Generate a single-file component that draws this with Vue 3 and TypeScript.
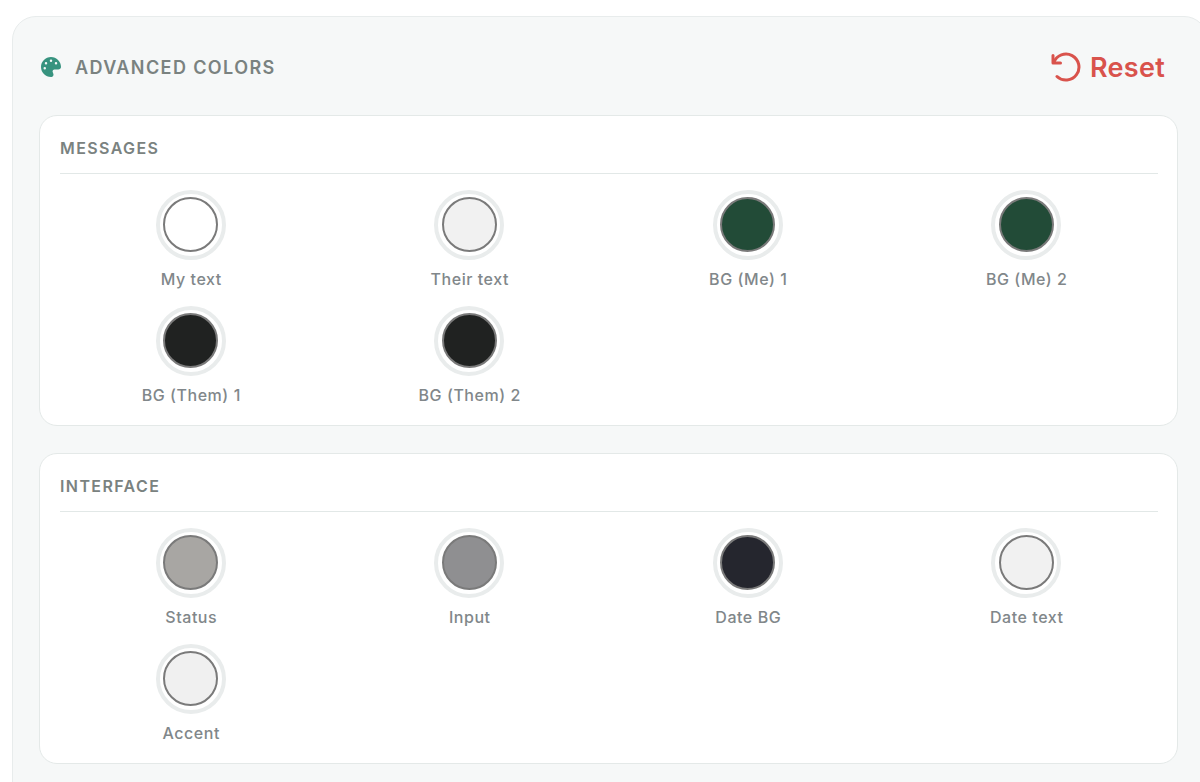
<script setup lang="ts">
interface Swatch { label: string; color: string }
interface Group { title: string; items: Swatch[] }
const groups: Group[] = [
  { title: 'MESSAGES', items: [
    { label: 'My text', color: '#ffffff' },
    { label: 'Their text', color: '#f1f1f1' },
    { label: 'BG (Me) 1', color: '#224b37' },
    { label: 'BG (Me) 2', color: '#224b37' },
    { label: 'BG (Them) 1', color: '#202221' },
    { label: 'BG (Them) 2', color: '#202221' },
  ] },
  { title: 'INTERFACE', items: [
    { label: 'Status', color: '#a8a6a3' },
    { label: 'Input', color: '#8f8f91' },
    { label: 'Date BG', color: '#25262e' },
    { label: 'Date text', color: '#f1f1f1' },
    { label: 'Accent', color: '#f0f0f0' },
  ] },
]
</script>

<template>
  <div class="page">
    <section class="panel">
      <header class="head">
        <div class="head-title">
          <svg class="palette" viewBox="0 0 512 512" aria-hidden="true">
            <path fill-rule="evenodd" d="M512 256c0 .9 0 1.800 0 2.700-.4 36.500-33.600 61.300-70.100 61.300H344c-26.500 0-48 21.500-48 48 0 3.400.4 6.700 1 9.900 2.100 10.200 6.500 20 10.800 29.900 6.100 13.800 12.100 27.500 12.100 42 0 31.800-21.600 60.700-53.400 62-3.500.1-7 .2-10.600.2C114.600 512 0 397.400 0 256S114.600 0 256 0s256 114.600 256 256zM128 288a32 32 0 1 0-64 0 32 32 0 1 0 64 0zm0-96a32 32 0 1 0 0-64 32 32 0 1 0 0 64zM288 96a32 32 0 1 0-64 0 32 32 0 1 0 64 0zm96 96a32 32 0 1 0 0-64 32 32 0 1 0 0 64z"/>
          </svg>
          <h2>ADVANCED COLORS</h2>
        </div>
        <button class="reset" type="button">
          <svg class="reset-icon" viewBox="0 0 30 30" aria-hidden="true">
            <path d="M2 3.500v7.500h7.500" />
            <path d="M2.800 10.500A13 13 0 1 1 6 24.500 13 13 0 0 0 8 26" />
          </svg>
          <span>Reset</span>
        </button>
      </header>

      <div class="groups">
        <div v-for="g in groups" :key="g.title" class="card">
          <h3>{{ g.title }}</h3>
          <div class="grid">
            <div v-for="s in g.items" :key="s.label" class="item">
              <span class="ring"><span class="dot" :style="{ background: s.color }"></span></span>
              <span class="label">{{ s.label }}</span>
            </div>
          </div>
        </div>
      </div>
    </section>
  </div>
</template>

<style scoped>
.page {
  height: 782px;
  overflow: hidden;
  padding: 16px 0 0 12px;
  box-sizing: border-box;
  background: #ffffff;
  font-family: Inter, "Liberation Sans", sans-serif;
}
.panel {
  box-sizing: border-box;
  width: 1196px;
  height: 800px;
  padding: 0 26px;
  background: #f6f8f8;
  border: 1px solid #e8ecec;
  border-radius: 24px;
}
.head {
  height: 98px;
  display: flex;
  align-items: center;
  justify-content: space-between;
  padding: 0 16px 0 2px;
}
.head-title {
  display: flex;
  align-items: center;
  gap: 14px;
  margin-top: 3px;
}
.palette {
  width: 20px;
  height: 20px;
  fill: #37937f;
  margin-top: -1px;
}
h2 {
  margin: 0;
  font-size: 18px;
  font-weight: 600;
  letter-spacing: 1.400px;
  color: #7a8280;
}
.reset {
  display: flex;
  align-items: center;
  gap: 9px;
  padding: 0;
  border: 0;
  background: none;
  color: #d9534c;
  font: inherit;
  font-size: 27px;
  font-weight: 600;
  letter-spacing: 0.300px;
  margin-top: 2px;
}
.reset-icon {
  width: 30px;
  height: 30px;
  fill: none;
  stroke: currentColor;
  stroke-width: 3;
  stroke-linecap: round;
  stroke-linejoin: round;
}
.groups {
  display: flex;
  flex-direction: column;
  gap: 27px;
}
.card {
  box-sizing: border-box;
  width: 1139px;
  height: 311px;
  padding: 0 19px 0 20px;
  background: #ffffff;
  border: 1px solid #e4e9e8;
  border-radius: 18px;
}
h3 {
  margin: 0;
  height: 57.500px;
  box-sizing: border-box;
  line-height: 65px;
  border-bottom: 1px solid #e2e8e7;
  font-size: 16px;
  font-weight: 600;
  letter-spacing: 1.400px;
  color: #7a8280;
}
.grid {
  display: grid;
  grid-template-columns: repeat(4, 1fr);
  column-gap: 16px;
  row-gap: 16px;
  padding-top: 16px;
}
.item {
  height: 100px;
  display: flex;
  flex-direction: column;
  align-items: center;
}
.ring {
  box-sizing: border-box;
  width: 70px;
  height: 70px;
  margin-left: -1px;
  border-radius: 50%;
  border: 4px solid #e9ecec;
  display: flex;
  align-items: center;
  justify-content: center;
  background: #fff;
}
.dot {
  box-sizing: border-box;
  width: 55px;
  height: 55px;
  border-radius: 50%;
  border: 2px solid #7a7a7a;
}
.label {
  margin-top: 9px;
  font-size: 16px;
  line-height: 20px;
  font-weight: 500;
  letter-spacing: 0.550px;
  color: #81878a;
}
</style>
